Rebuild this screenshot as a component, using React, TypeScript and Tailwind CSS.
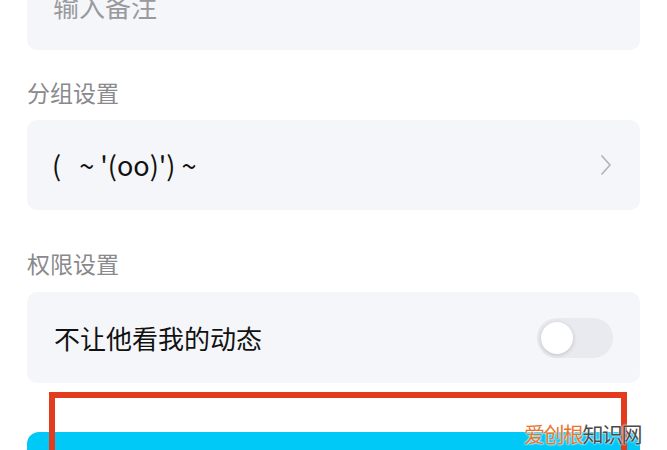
// Friend settings sheet: remark, group and permission rows

const font = { fontFamily: '"Noto Sans CJK SC", "Noto Sans", sans-serif' };

const Chevron = () => (
  <svg width="14" height="22" viewBox="0 0 14 22" fill="none">
    <polyline points="3,2 11,11 3,20" stroke="#b4b6bc" strokeWidth="1.8" strokeLinecap="round" strokeLinejoin="round" />
  </svg>
);

const Toggle = () => (
  <div className="w-[76px] h-[40px] rounded-full bg-[#e8eaf0] flex items-center px-[4px]">
    <div className="w-[32px] h-[32px] rounded-full bg-white shadow-[0_1px_4px_rgba(0,0,0,0.18)]" />
  </div>
);

const SectionLabel = ({ children }: { children: React.ReactNode }) => (
  <div className="text-[23px] leading-[30px] text-[#8a8a8e]">{children}</div>
);

export default function App() {
  return (
    <div className="relative w-[667px] h-[450px] overflow-hidden bg-white" style={font}>
      <div className="flex flex-col px-[27px]">
        {/* remark input */}
        <div className="-mt-[40px] h-[90px] rounded-[10px] bg-[#f5f6fa] flex items-center pl-[26px]">
          <span className="text-[26px] text-[#9a9a9e]">输入备注</span>
        </div>

        <div className="mt-[27px]">
          <SectionLabel>分组设置</SectionLabel>
        </div>

        <div className="mt-[13px] h-[90px] rounded-[10px] bg-[#f5f6fa] flex items-center justify-between pl-[25px] pr-[27px]">
          <span className="text-[27px] text-[#111] whitespace-pre">{"(   ~ '(oo)') ~"}</span>
          <Chevron />
        </div>

        <div className="mt-[38px]">
          <SectionLabel>权限设置</SectionLabel>
        </div>

        <div className="mt-[14px] h-[91px] rounded-[10px] bg-[#f5f6fa] flex items-center justify-between pl-[27px] pr-[27px]">
          <span className="text-[26px] text-[#111]">不让他看我的动态</span>
          <Toggle />
        </div>

        {/* confirm button, cut off at the bottom */}
        <div className="mt-[49px] h-[40px] rounded-t-[12px] bg-[#00c9f7]" />
      </div>

      {/* highlight frame */}
      <div className="absolute left-[49px] top-[392px] w-[578px] h-[80px] border-[6px] border-[#e23b1d]" />

      {/* site mark */}
      <div
        className="absolute right-[26px] top-[419px] text-[21px] leading-[28px] tracking-[-1.5px]"
        style={{ textShadow: '0 0 2px #fff, 0 0 2px #fff' }}
      >
        <span className="text-[#e8742c]">爱创根</span>
        <span className="text-[#4a4a4a]">知识网</span>
      </div>
    </div>
  );
}
